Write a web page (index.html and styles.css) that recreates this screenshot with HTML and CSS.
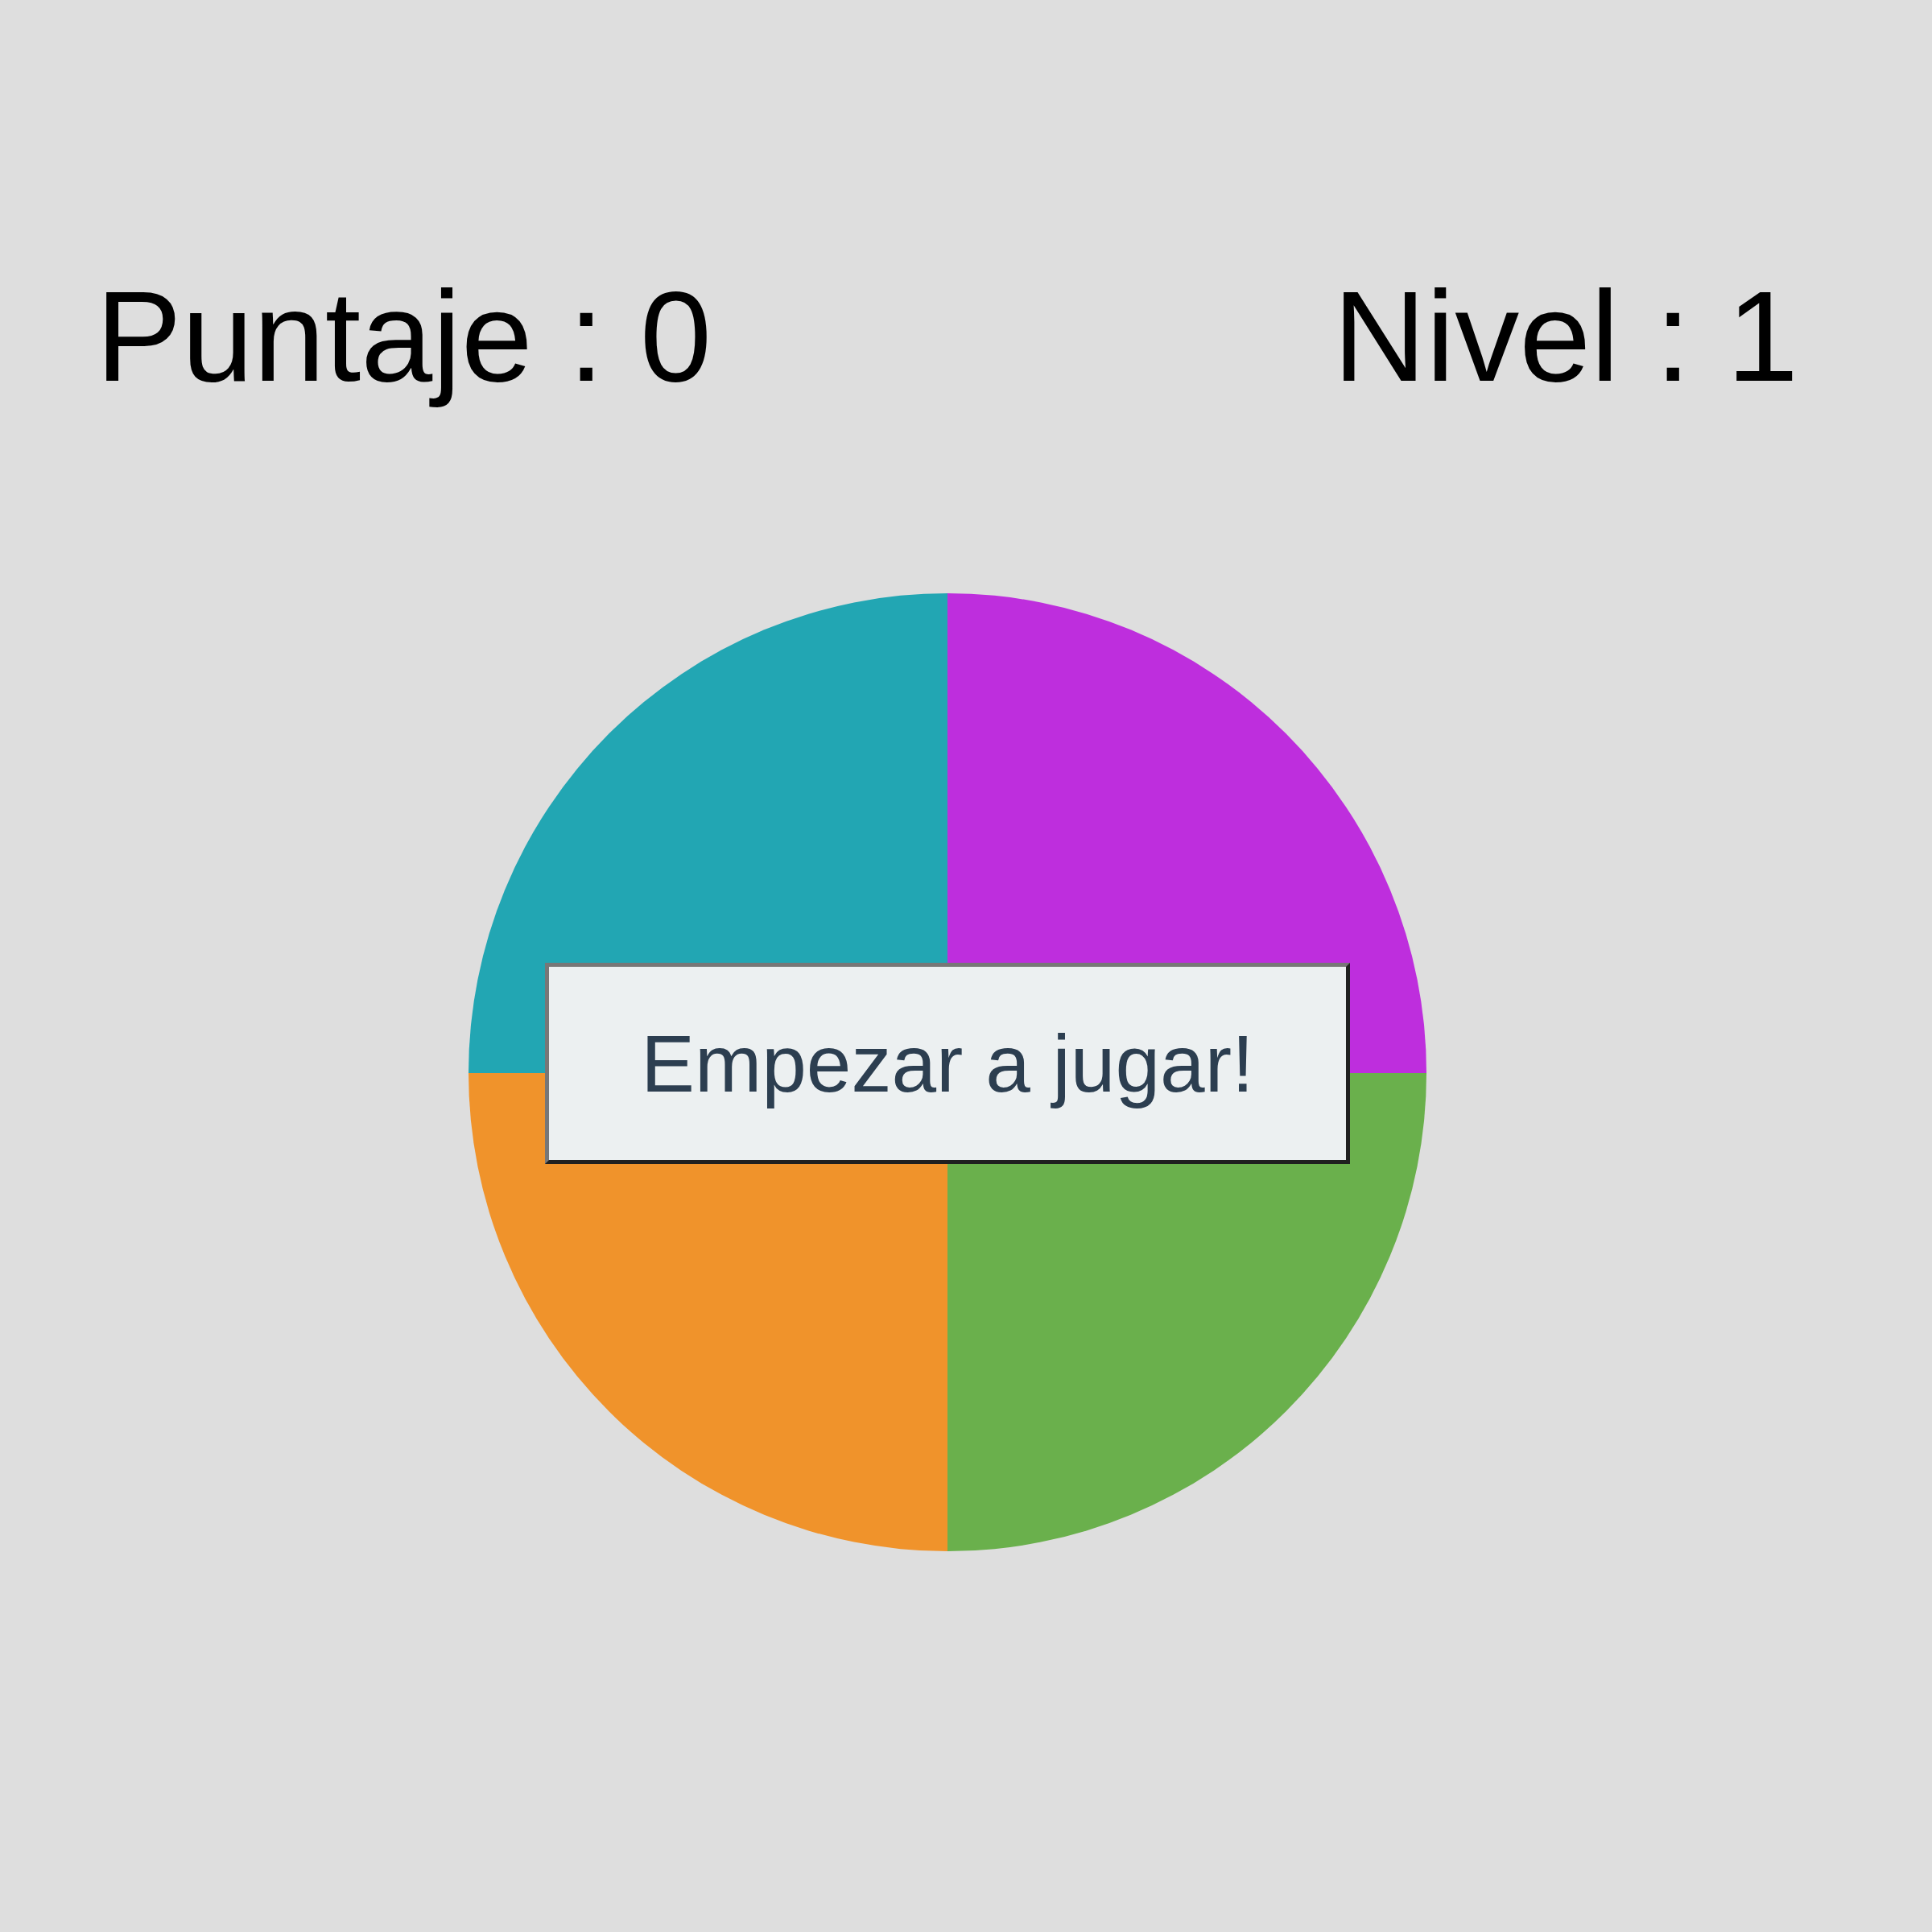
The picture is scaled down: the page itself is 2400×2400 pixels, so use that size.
FILE: index.html
```html
<!DOCTYPE html>
<html lang="es">
<head>
<meta charset="utf-8">
<title>Simon</title>
<link rel="stylesheet" href="styles.css">
</head>
<body>
<header class="marcador">
  <div class="puntaje">Puntaje : 0</div>
  <div class="nivel">Nivel : 1</div>
</header>
<main class="tablero">
  <div class="circulo">
    <div class="cuadrante celeste"></div>
    <div class="cuadrante violeta"></div>
    <div class="cuadrante naranja"></div>
    <div class="cuadrante verde"></div>
    <button class="btn-empezar">Empezar a jugar!</button>
  </div>
</main>
</body>
</html>
```
FILE: styles.css
```css
html, body {
  margin: 0;
  padding: 0;
}
body {
  background: #dedede;
  font-family: "Liberation Sans", Arial, sans-serif;
  width: 2400px;
  height: 2400px;
}
.marcador {
  display: flex;
  justify-content: space-between;
  padding: 338px 166px 0 119px;
  font-size: 160px;
  line-height: 1;
  color: #000;
}
.tablero {
  padding: 239px 0 0 582px;
}
.circulo {
  position: relative;
  width: 1190px;
  height: 1190px;
  display: grid;
  grid-template-columns: 595px 595px;
  grid-template-rows: 596px 594px;
}
.celeste {
  background: #22a6b3;
  border-top-left-radius: 595px 596px;
}
.violeta {
  background: #be2edd;
  border-top-right-radius: 595px 596px;
}
.naranja {
  background: #f0932b;
  border-bottom-left-radius: 595px 594px;
}
.verde {
  background: #6ab04c;
  border-bottom-right-radius: 595px 594px;
}
.btn-empezar {
  position: absolute;
  left: 95px;
  top: 459px;
  width: 1000px;
  height: 250px;
  box-sizing: border-box;
  margin: 0;
  padding: 0;
  background: #ecf0f1;
  color: #2c3e50;
  font-family: "Liberation Sans", Arial, sans-serif;
  font-size: 100px;
  line-height: 1;
  border-style: solid;
  border-width: 5px;
  border-color: #777777 #202020 #202020 #777777;
  cursor: pointer;
}
```
